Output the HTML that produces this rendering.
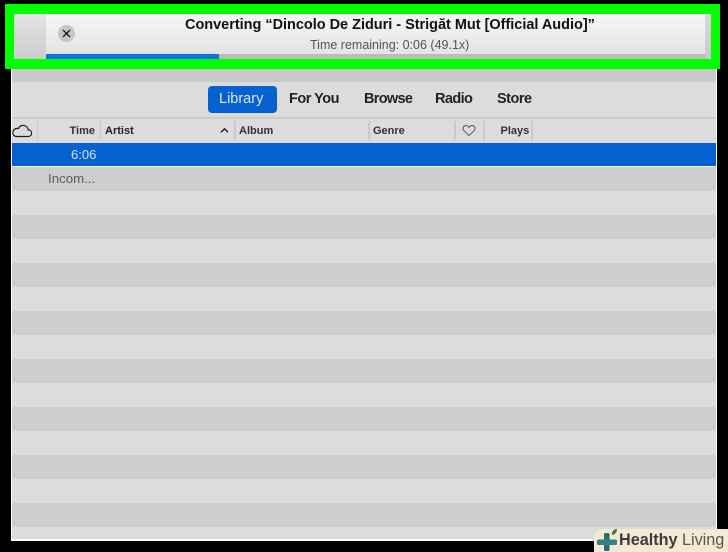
<!DOCTYPE html>
<html>
<head>
<meta charset="utf-8">
<style>
html,body{margin:0;padding:0;background:#000;}
body{width:728px;height:552px;position:relative;overflow:hidden;font-family:"Liberation Sans",sans-serif;}
.a{position:absolute;}
.t{position:absolute;white-space:nowrap;}
.sep{position:absolute;top:121px;width:1.5px;height:19px;background:#cacaca;}
.h{font-size:11px;top:124px;color:#222;line-height:14px;}
.n{font-size:14.5px;top:90px;line-height:18px;color:#222;font-weight:bold;}
</style>
</head>
<body>
<!-- window -->
<div class="a" style="left:11px;top:60px;width:706px;height:481px;background:#fff;"></div>
<div class="a" style="left:12px;top:60px;width:704px;height:479px;background:#dcdcdc;"></div>
<div class="a" style="left:12px;top:69px;width:704px;height:13px;background:#c9c9c9;"></div>
<div class="a" style="left:12px;top:117px;width:704px;height:2px;background:#cbcbcb;"></div>

<!-- rows -->
<div class="a" style="left:12px;top:143px;width:704px;height:23px;background:#0560d2;"></div>
<div class="a" style="left:12px;top:166px;width:704px;height:1px;background:#f0f0f0;"></div>
<div class="a" style="left:12px;top:167px;width:704px;height:24px;background:#cdcdcd;"></div>
<div class="a" style="left:12px;top:215px;width:704px;height:24px;background:#cdcdcd;"></div>
<div class="a" style="left:12px;top:263px;width:704px;height:24px;background:#cdcdcd;"></div>
<div class="a" style="left:12px;top:311px;width:704px;height:24px;background:#cdcdcd;"></div>
<div class="a" style="left:12px;top:359px;width:704px;height:24px;background:#cdcdcd;"></div>
<div class="a" style="left:12px;top:407px;width:704px;height:24px;background:#cdcdcd;"></div>
<div class="a" style="left:12px;top:455px;width:704px;height:24px;background:#cdcdcd;"></div>
<div class="a" style="left:12px;top:503px;width:704px;height:24px;background:#cdcdcd;"></div>

<!-- nav -->
<div class="a" style="left:208px;top:86px;width:69px;height:27px;background:#0560d2;border-radius:4px;"></div>
<div class="t" style="left:219px;top:90px;font-size:14.5px;line-height:18px;color:#dbe8fb;">Library</div>
<div class="t n" style="left:289px;letter-spacing:-.5px;">For You</div>
<div class="t n" style="left:364px;letter-spacing:-.7px;">Browse</div>
<div class="t n" style="left:435px;letter-spacing:-.6px;">Radio</div>
<div class="t n" style="left:497px;letter-spacing:-.5px;">Store</div>

<!-- header -->
<svg class="a" style="left:12px;top:122px;" width="21" height="18" viewBox="0 0 21 18">
<path d="M4.5 14.5 H16 C18.6 14.5 19.6 12.8 19.6 11.2 C19.6 9.4 18.3 8 16.3 8 C15.8 5.2 13.8 3.4 11.2 3.4 C9 3.4 7.4 4.6 6.6 6.4 C3.2 6 .8 8 .8 10.8 C.8 12.9 2.3 14.5 4.5 14.5 Z" fill="none" stroke="#1d1d1d" stroke-width="1.2"/>
</svg>
<div class="sep" style="left:36.5px;"></div>
<div class="t h" style="left:69.5px;font-weight:bold;color:#333;">Time</div>
<div class="sep" style="left:99.5px;"></div>
<div class="t h" style="left:105px;font-weight:bold;">Artist</div>
<svg class="a" style="left:219px;top:126px;" width="11" height="9" viewBox="0 0 11 9"><path d="M2 6.2 L5.5 2.8 L9 6.2" fill="none" stroke="#1a1a1a" stroke-width="1.4"/></svg>
<div class="sep" style="left:234px;"></div>
<div class="t h" style="left:239px;font-weight:bold;color:#333;">Album</div>
<div class="sep" style="left:368px;"></div>
<div class="t h" style="left:373px;font-weight:bold;color:#333;">Genre</div>
<div class="sep" style="left:454px;"></div>
<svg class="a" style="left:462px;top:124px;" width="14" height="13" viewBox="0 0 14 13"><path d="M7 11.6 L1.9 6.6 C.2 4.8 1 1.6 3.9 1.6 C5.4 1.6 6.4 2.4 7 3.5 C7.6 2.4 8.6 1.6 10.1 1.6 C13 1.6 13.8 4.8 12.1 6.6 Z" fill="none" stroke="#666" stroke-width="1.1"/></svg>
<div class="sep" style="left:483px;"></div>
<div class="t h" style="left:500.5px;font-weight:bold;color:#333;">Plays</div>
<div class="sep" style="left:531px;"></div>

<div class="t" style="left:71px;top:147px;font-size:13px;line-height:16px;color:#d5e4f8;">6:06</div>
<div class="t" style="left:48px;top:171px;font-size:13.3px;line-height:16px;color:#5e5e5e;">Incom...</div>

<!-- green frame -->
<div class="a" style="left:5px;top:4px;width:715px;height:65px;background:#00ff00;"></div>
<div class="a" style="left:14px;top:14px;width:697px;height:45px;background:linear-gradient(#f6f6f6,#e2e2e2);"></div>
<div class="a" style="left:14px;top:14px;width:32px;height:45px;background:linear-gradient(#e4e4e4,#cdcdcd);"></div>
<div class="a" style="left:705px;top:14px;width:6px;height:45px;background:linear-gradient(#d8d8d8,#c9c9c9);"></div>
<div class="a" style="left:46px;top:54px;width:659px;height:5px;background:#bcbcbc;"></div>
<div class="a" style="left:46px;top:54px;width:173px;height:5px;background:#1270e8;"></div>

<!-- close -->
<div class="a" style="left:58px;top:25px;width:17px;height:17px;border-radius:50%;background:#c6c6c6;"></div>
<svg class="a" style="left:58px;top:25px;" width="17" height="17" viewBox="0 0 17 17"><path d="M5 5 L12 12 M12 5 L5 12" stroke="#1a1a1a" stroke-width="1.4" fill="none"/></svg>

<div class="t" style="left:185px;top:16px;font-size:14.5px;line-height:18px;font-weight:bold;color:#111;letter-spacing:-.02px;">Converting “Dincolo De Ziduri - Strigăt Mut [Official Audio]”</div>
<div class="t" style="left:310px;top:37px;font-size:12.5px;line-height:16px;color:#555;">Time remaining: 0:06 (49.1x)</div>

<!-- watermark -->
<div class="a" style="left:594px;top:529px;width:134px;height:23px;background:#f4ead3;border-radius:8px 0 0 0;"></div>
<svg class="a" style="left:596px;top:527px;" width="24" height="25" viewBox="0 0 24 25">
<rect x="8" y="6" width="5.5" height="18" rx="1.5" fill="#2d6b70"/>
<rect x="1" y="12.5" width="20" height="5.5" rx="1.5" fill="#35808a"/>
<path d="M16 8 C15.5 4 18 2 21 2 C21 5 19.5 7.5 16 8 Z" fill="#3f7d35"/>
</svg>
<div class="t" style="left:619px;top:531px;font-size:16.2px;line-height:19px;color:#3b3b3b;"><b>Healthy</b> <span style="color:#555;">Living</span></div>
</body>
</html>
